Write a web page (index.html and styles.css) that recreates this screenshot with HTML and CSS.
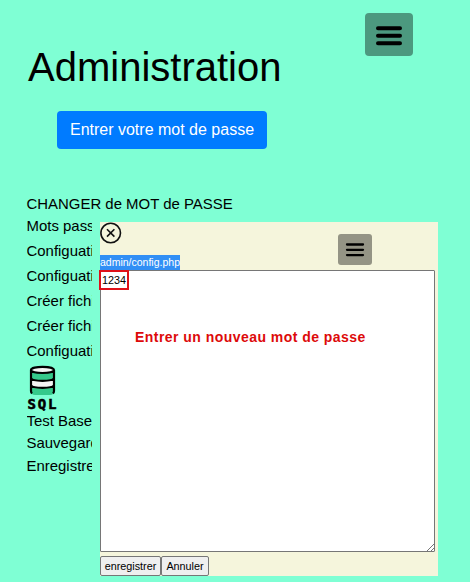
FILE: index.html
```html
<!DOCTYPE html>
<html lang="fr">
<head>
<meta charset="utf-8">
<title>Administration</title>
<link rel="stylesheet" href="styles.css">
</head>
<body>
<button class="menu menu-main" aria-label="Menu"><svg width="26" height="20" viewBox="0 0 26 20"><path d="M2 2.2H24M2 9.7H24M2 17.2H24"/></svg></button>
<main class="page">
  <h1 class="title">Administration</h1>
  <button class="primary">Entrer votre mot de passe</button>
  <div class="heading">CHANGER de MOT de PASSE</div>
  <nav class="list">
    <div class="row">Mots passe</div>
    <div class="row">Configuation</div>
    <div class="row">Configuation</div>
    <div class="row">Créer fichier</div>
    <div class="row">Créer fichier</div>
    <div class="row">Configuation</div>
    <svg class="sql" width="31" height="46" viewBox="0 0 31 46">
      <path d="M4 5V26Q4 30 8 30H23Q27 30 27 26V5Z" fill="#35c98b"/>
      <path d="M4 13Q5 15.5 15.5 15.5T27 13V20Q26 22.5 15.5 22.5T4 20Z" fill="#f4f4f4"/>
      <ellipse cx="15.5" cy="4.8" rx="11.5" ry="3" fill="#f4f4f4"/>
      <path d="M5 28.5Q4 27.5 4 26V5C4 .8 27 .8 27 5V26Q27 27.5 26 28.5M4 5C4 9 27 9 27 5M4 13Q5 15.8 15.5 15.8T27 13M4 20Q5 22.8 15.5 22.8T27 20" fill="none" stroke="#000" stroke-width="2.2"/>
      <text x="0.5" y="43.5" textLength="29">SQL</text>
    </svg>
    <div class="row tight">Test Base</div>
    <div class="row tight">Sauvegarde</div>
    <div class="row tight">Enregistrer</div>
  </nav>
</main>
<section class="dialog">
  <header class="bar">
    <svg width="22" height="22" viewBox="0 0 22 22"><circle cx="10.7" cy="11" r="9.8"/><path d="M7 7.2L14.4 14.6M14.4 7.2L7 14.6"/></svg>
    <button class="menu menu-small" aria-label="Menu"><svg width="20" height="14" viewBox="0 0 20 14"><path d="M2 1.5H18M2 6.8H18M2 12.1H18"/></svg></button>
  </header>
  <div class="file"><span>admin/config.php</span></div>
  <div class="editor">
    <div class="value">1234</div>
    <div class="hint">Entrer un nouveau mot de passe</div>
    <svg class="grip" width="7" height="7" viewBox="0 0 7 7"><path d="M0 7L7 0M4 7L7 4"/></svg>
  </div>
  <div class="actions"><button class="save">enregistrer</button><button class="cancel">Annuler</button></div>
</section>
</body>
</html>
```
FILE: styles.css
```css
* { box-sizing: border-box; }
body {
  margin: 0;
  height: 582px;
  overflow: hidden;
  position: relative;
  background: #7fffd4;
  color: #000;
  font: 14.95px/26px "Liberation Sans", Arial, sans-serif;
}
button { font-family: inherit; margin: 0; }
svg { display: block; }
.menu { border: 0; padding: 0; display: flex; justify-content: center; }
.menu path { stroke: #000; stroke-linecap: round; }
.menu-main {
  position: absolute;
  left: 365px;
  top: 13px;
  width: 48px;
  height: 43px;
  padding-top: 13px;
  border-radius: 4px;
  background: #4c997f;
}
.menu-main path { stroke-width: 4; }
.page { padding: 43px 0 0 26.5px; }
.title { margin: 0 0 0 1.5px; font-size: 40px; line-height: 48px; font-weight: 400; }
.primary {
  display: block;
  margin: 20px 0 0 30.5px;
  width: 210px;
  height: 38px;
  padding: 0;
  border: 0;
  border-radius: 4px;
  background: #007bff;
  color: #fff;
  font-size: 16px;
}
.heading { margin-top: 42px; height: 22px; }
.list { width: 65.5px; overflow: hidden; white-space: nowrap; }
.row { height: 25px; }
.sql { margin-top: 2px; }
.sql text { font: 700 14px "DejaVu Sans Mono", monospace; stroke: #000; stroke-width: .6; }
.row.tight { height: 22.4px; line-height: 20px; }
.dialog {
  position: absolute;
  left: 100px;
  top: 222px;
  width: 338px;
  height: 354px;
  background: #f5f5dc;
}
.bar { height: 33px; display: flex; align-items: flex-start; }
.bar > svg { fill: none; stroke: #111; stroke-width: 1.6; }
.menu-small {
  margin: 12px 0 0 215.5px;
  width: 34px;
  height: 31px;
  padding-top: 9px;
  border-radius: 3px;
  background: #949485;
}
.menu-small path { stroke-width: 2.3; }
.file { height: 15px; font-size: 10.5px; line-height: 15px; }
.file span { display: inline-block; background: #318ff5; color: #fff; }
.editor {
  position: relative;
  width: 335px;
  height: 282px;
  border: 1px solid #767676;
  border-radius: 1px;
  background: #fff;
}
.value {
  position: absolute;
  left: -2px;
  top: -1px;
  width: 30px;
  height: 20px;
  border: 2px solid #df1119;
  font-size: 10.8px;
  line-height: 16px;
  text-align: center;
}
.hint {
  padding: 56px 0 0 34px;
  color: #dd0a0a;
  font-size: 14px;
  line-height: 20px;
  font-weight: 700;
  letter-spacing: .46px;
  white-space: nowrap;
}
.grip { position: absolute; right: 0; bottom: 0; }
.grip path { stroke: #777; stroke-width: 1; }
.actions { display: flex; margin-top: 4px; }
.actions button {
  height: 20px;
  padding: 0;
  border: 1px solid #767676;
  border-radius: 2px;
  background: #efefef;
  color: #000;
  font-size: 10.8px;
}
.save { width: 61px; }
.cancel { width: 48px; }
```
